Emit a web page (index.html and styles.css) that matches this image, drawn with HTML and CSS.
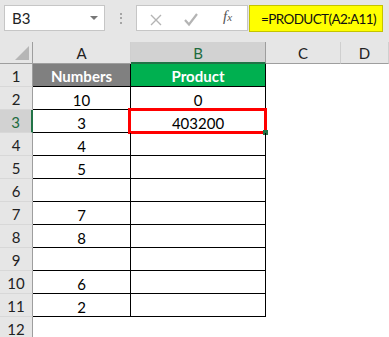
FILE: index.html
```html
<!DOCTYPE html>
<html>
<head>
<meta charset="utf-8">
<link rel="stylesheet" href="styles.css">
</head>
<body>
<div class="topbar">
  <div class="namebox"><span class="ref">B3</span><span class="drop"></span></div>
  <div class="sep"><i></i><i></i><i></i></div>
  <div class="fbtns">
    <svg class="ico" width="112" height="24" viewBox="0 0 112 24">
      <path d="M14 9 L24 19 M24 9 L14 19" stroke="#b4b4b4" stroke-width="1.4" fill="none"/>
      <path d="M48 14 L52 18.5 L60 8" stroke="#b4b4b4" stroke-width="2.2" fill="none"/>
    </svg>
    <span class="fx">f<span class="x">x</span></span>
  </div>
  <div class="formula">=PRODUCT(A2:A11)</div>
</div>
<div class="sheet">
  <div class="corner"><span class="tri"></span></div>
  <div class="ch">A</div>
  <div class="ch sel">B</div>
  <div class="ch">C</div>
  <div class="ch">D</div>

  <div class="rh">1</div><div class="c b gray">Numbers</div><div class="c b green">Product</div><div class="e"></div><div class="e"></div>
  <div class="rh">2</div><div class="c">10</div><div class="c">0</div><div class="e"></div><div class="e"></div>
  <div class="rh sel">3</div><div class="c">3</div><div class="c active">403200<span class="redbox"></span><span class="handle"></span></div><div class="e"></div><div class="e"></div>
  <div class="rh">4</div><div class="c">4</div><div class="c"></div><div class="e"></div><div class="e"></div>
  <div class="rh">5</div><div class="c">5</div><div class="c"></div><div class="e"></div><div class="e"></div>
  <div class="rh">6</div><div class="c"></div><div class="c"></div><div class="e"></div><div class="e"></div>
  <div class="rh">7</div><div class="c">7</div><div class="c"></div><div class="e"></div><div class="e"></div>
  <div class="rh">8</div><div class="c">8</div><div class="c"></div><div class="e"></div><div class="e"></div>
  <div class="rh">9</div><div class="c"></div><div class="c"></div><div class="e"></div><div class="e"></div>
  <div class="rh">10</div><div class="c">6</div><div class="c"></div><div class="e"></div><div class="e"></div>
  <div class="rh">11</div><div class="c">2</div><div class="c"></div><div class="e"></div><div class="e"></div>
  <div class="rh">12</div><div class="e"></div><div class="e"></div><div class="e"></div><div class="e"></div>
</div>
</body>
</html>
```
FILE: styles.css
```css
* { box-sizing: border-box; }
html, body { margin: 0; padding: 0; }
body {
  width: 389px;
  height: 337px;
  overflow: hidden;
  background: #ffffff;
  font-family: Lato, "Open Sans", sans-serif;
  font-size: 15px;
  color: #000;
}
.topbar {
  height: 42px;
  background: #e6e6e6;
  display: flex;
  align-items: flex-start;
  padding-top: 5px;
}
.namebox {
  margin-left: 4px;
  width: 101px;
  height: 26px;
  background: #fff;
  border: 1px solid #c6c6c6;
  display: flex;
  align-items: center;
  justify-content: space-between;
  padding: 0 6px 0 7px;
}
.ref { font-size: 15px; color: #222; }
.drop {
  width: 0; height: 0;
  border-left: 4px solid transparent;
  border-right: 4px solid transparent;
  border-top: 4px solid #777;
}
.sep {
  width: 31px;
  height: 26px;
  display: flex;
  flex-direction: column;
  align-items: center;
  justify-content: center;
  gap: 2.5px;
}
.sep i { display: block; width: 2px; height: 2px; background: #a5a5a5; }
.fbtns {
  width: 112px;
  height: 26px;
  background: #fff;
  border: 1px solid #c6c6c6;
  position: relative;
  display: flex;
  align-items: center;
}
.ico { position: absolute; left: 0; top: 0; }
.fx {
  position: absolute;
  left: 86px;
  top: 2px;
  font-family: "Liberation Serif", serif;
  font-style: italic;
  font-size: 15px;
  color: #555;
}
.fx .x { font-size: 11px; }
.formula {
  margin-left: 1px;
  width: 134px;
  height: 27px;
  background: #ffff00;
  border: 1px solid #c4c400;
  padding-left: 11px;
  display: flex;
  align-items: center;
  font-size: 13.5px;
  letter-spacing: -0.6px;
  white-space: nowrap;
  color: #111;
}
.sheet {
  display: grid;
  grid-template-columns: 33px 98px 135px 75px 48px;
  grid-template-rows: 22px repeat(12, 23px);
}
.corner {
  background: #e6e6e6;
  border-right: 1px solid #9e9e9e;
  border-bottom: 1px solid #9e9e9e;
  position: relative;
}
.tri {
  position: absolute;
  right: 3px;
  bottom: 3px;
  width: 0; height: 0;
  border-left: 14px solid transparent;
  border-bottom: 14px solid #b6b6b6;
}
.ch {
  background: #e6e6e6;
  border-right: 1px solid #cfcfcf;
  border-bottom: 1px solid #9e9e9e;
  display: flex;
  align-items: center;
  justify-content: center;
  padding-top: 1px;
  font-size: 15px;
  color: #222;
}
.ch.sel {
  background: #d2d2d2;
  border-right: 1px solid #9e9e9e;
  border-bottom: 2px solid #217346;
  color: #1e6b3e;
  padding-top: 2px;
}
.rh {
  background: #e6e6e6;
  border-right: 1px solid #9e9e9e;
  border-bottom: 1px solid #d8d8d8;
  display: flex;
  align-items: center;
  justify-content: center;
  padding-top: 2px;
  font-size: 15px;
  color: #222;
}
.rh.sel {
  background: #d2d2d2;
  border-right: 2px solid #217346;
  color: #1e6b3e;
}
.c {
  border-right: 1px solid #000;
  border-bottom: 1px solid #000;
  display: flex;
  align-items: center;
  justify-content: center;
  padding-top: 3px;
  font-size: 15px;
  position: relative;
}
.c.b { font-weight: 700; color: #fff; padding-top: 1px; }
.gray { background: #808080; }
.green { background: #00b050; }
.e { background: #fff; }
.redbox {
  position: absolute;
  left: -3px;
  top: -2px;
  right: -2px;
  bottom: -2px;
  border: 3px solid #ff0000;
}
.handle {
  position: absolute;
  right: -3px;
  bottom: -3px;
  width: 5px;
  height: 5px;
  background: #217346;
}
```
